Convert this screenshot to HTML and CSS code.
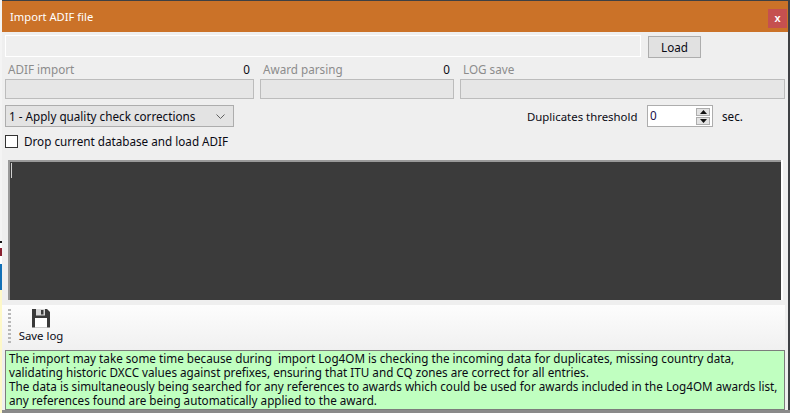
FILE: index.html
```html
<!DOCTYPE html>
<html lang="en">
<head>
<meta charset="utf-8">
<title>Import ADIF file</title>
<link rel="stylesheet" href="styles.css">
</head>
<body>
<div class="window">
  <header class="titlebar">
    <span class="title">Import ADIF file</span>
    <button class="close">x</button>
  </header>
  <div class="file-row">
    <div class="path"></div>
    <button class="load">Load</button>
  </div>
  <div class="progress-row">
    <div class="progress first">
      <div class="progress-head"><span class="muted">ADIF import</span><span>0</span></div>
      <div class="bar"></div>
    </div>
    <div class="progress second">
      <div class="progress-head"><span class="muted">Award parsing</span><span>0</span></div>
      <div class="bar"></div>
    </div>
    <div class="progress third">
      <div class="progress-head"><span class="muted">LOG save</span></div>
      <div class="bar"></div>
    </div>
  </div>
  <div class="options-row">
    <div class="select">
      <span>1 - Apply quality check corrections</span>
      <svg class="chevron" width="9" height="5" viewBox="0 0 9 5"><path d="M.5.5l4 4 4-4" fill="none" stroke="#606060"/></svg>
    </div>
    <span class="dup-label">Duplicates threshold</span>
    <div class="spinner">
      <span class="spin-value">0</span>
      <div class="spin-btns">
        <span class="spin-btn"><svg width="7" height="4" viewBox="0 0 7 4"><path d="M3.5 0L7 4H0z" fill="#111"/></svg></span>
        <span class="spin-btn"><svg width="7" height="4" viewBox="0 0 7 4"><path d="M0 0h7L3.5 4z" fill="#111"/></svg></span>
      </div>
    </div>
    <span class="sec">sec.</span>
  </div>
  <div class="check-row">
    <span class="checkbox"></span>
    <span>Drop current database and load ADIF</span>
  </div>
  <div class="console"><span class="caret"></span></div>
  <div class="toolbar">
    <span class="grip"></span>
    <div class="tool">
      <svg class="floppy" width="20" height="20" viewBox="0 0 20 20">
        <path d="M1 1h15l3 3v15.500H1z" fill="#3a3a3a"/>
        <rect x="4" y="10" width="12" height="9.500" fill="#fff"/>
        <rect x="5" y="1" width="9" height="6.500" fill="#d8d8d8"/>
        <rect x="10" y="2" width="2.500" height="4.500" fill="#3a3a3a"/>
      </svg>
      <span class="tool-label">Save log</span>
    </div>
  </div>
  <div class="note">The import may take some time because during&nbsp; import Log4OM is checking the incoming data for duplicates, missing country data,<br>validating historic DXCC values against prefixes, ensuring that ITU and CQ zones are correct for all entries.<br>The data is simultaneously being searched for any references to awards which could be used for awards included in the Log4OM awards list,<br>any references found are being automatically applied to the award.</div>
</div>
</body>
</html>
```
FILE: styles.css
```css
* { box-sizing: border-box; }
html, body { height: 100%; }
body {
  margin: 0;
  padding: 1px 2px 3px 2px;
  width: 790px;
  height: 413px;
  overflow: hidden;
  font-family: "Noto Sans", "Open Sans", sans-serif;
  font-size: 11.7px;
  color: #0a0a14;
  background:
    linear-gradient(#8a8a8a, #8a8a8a) 2px 410px / 788px 3px no-repeat,
    linear-gradient(#f4f4f4 0 241px, #111 241px 243px, #fff 243px 248px, #8a2030 248px 256px, #fff 256px 264px, #1070b8 264px 290px, #fdf8c8 290px 413px) 0 0 / 2px 413px no-repeat,
    #3e4044;
}
.window {
  display: flex;
  flex-direction: column;
  width: 786px;
  height: 409px;
  background: #efefef;
}
.titlebar {
  display: flex;
  align-items: center;
  justify-content: space-between;
  flex: none;
  height: 31px;
  padding: 0 1px 0 8px;
  background: #cb7228;
  color: #fff;
}
.title { font-size: 11.2px; }
.close {
  width: 19px;
  height: 19px;
  margin-top: 4px;
  padding: 0 0 2px;
  border: 0;
  background: #c5504f;
  color: #fff;
  font: bold 11px "Liberation Sans", sans-serif;
}
.file-row {
  display: flex;
  align-items: flex-start;
  gap: 7px;
  height: 30px;
  padding: 3px 0 0 3px;
}
.path {
  width: 636px;
  height: 22px;
  background: #efefef;
  border: 1px solid #fff;
}
.load {
  width: 53px;
  height: 22px;
  margin-top: 1px;
  padding: 0;
  border: 1px solid #adadad;
  background: #e1e1e1;
  color: inherit;
  font: inherit;
}
.progress-row {
  display: flex;
  gap: 6px;
  padding-left: 3px;
  height: 38px;
}
.progress { display: flex; flex-direction: column; }
.first { width: 249px; }
.second { width: 194px; }
.third { width: 325px; }
.progress-head {
  display: flex;
  justify-content: space-between;
  height: 17px;
  padding: 0 4px 0 3px;
  line-height: 14px;
}
.muted { color: #8c8c8c; }
.bar {
  height: 20px;
  background: #e6e6e6;
  border: 1px solid #bcbcbc;
}
.options-row {
  display: flex;
  align-items: center;
  height: 22px;
  margin-top: 5px;
  padding-left: 3px;
}
.select {
  display: flex;
  align-items: center;
  justify-content: space-between;
  width: 229px;
  height: 22px;
  padding: 0 8px 0 3px;
  background: #e3e3e3;
  border: 1px solid #adadad;
}
.dup-label { margin-left: 293px; width: 120px; white-space: nowrap; font-size: 11.4px; }
.spinner {
  display: flex;
  justify-content: space-between;
  width: 66px;
  height: 22px;
  padding: 1px;
  background: #fff;
  border: 1px solid #adadad;
}
.spin-value { padding-left: 1px; line-height: 16px; color: #20104a; }
.spin-btns { display: flex; flex-direction: column; gap: 1px; padding: 1px 1px 0 0; }
.spin-btn {
  display: flex;
  align-items: center;
  justify-content: center;
  width: 14px;
  height: 8px;
  background: #e3e3e3;
  border: 1px solid #adadad;
}
.sec { margin-left: 9px; }
.check-row {
  display: flex;
  align-items: center;
  gap: 6px;
  height: 16px;
  margin-top: 6px;
  padding-left: 3px;
}
.checkbox {
  width: 13px;
  height: 13px;
  background: #fff;
  border: 1px solid #333;
}
.console {
  flex: none;
  width: 773px;
  height: 140px;
  margin: 11px 0 0 6px;
  padding: 1px;
  background: #3b3b3b;
  border-style: solid;
  border-width: 2px 0 0 2px;
  border-color: #9a9a9a;
  box-shadow: 2px 0 0 #fff;
}
.caret {
  display: block;
  width: 1px;
  height: 15px;
  background: #d0d0d0;
}
.toolbar {
  display: flex;
  flex: none;
  height: 45px;
  margin: 5px 3px 0 0;
  padding-left: 6px;
  background: linear-gradient(#fdfdfd, #f0f0f0);
}
.grip {
  width: 3px;
  height: 34px;
  margin-top: 4px;
  background: repeating-linear-gradient(#b8b8b8 0 2px, transparent 2px 4px);
}
.tool {
  display: flex;
  flex-direction: column;
  align-items: center;
  flex: none;
  width: 44px;
  margin-left: 8px;
  padding-top: 3px;
  line-height: 15px;
}
.floppy { flex: none; }
.tool-label { white-space: nowrap; font-size: 11.4px; }
.note {
  height: 60px;
  margin: 0 3px 0 3px;
  padding: 0 0 0 3px;
  background: #c0ffc0;
  border: 1px solid #7c7c7c;
  line-height: 14px;
  white-space: nowrap;
  overflow: hidden;
}
```
